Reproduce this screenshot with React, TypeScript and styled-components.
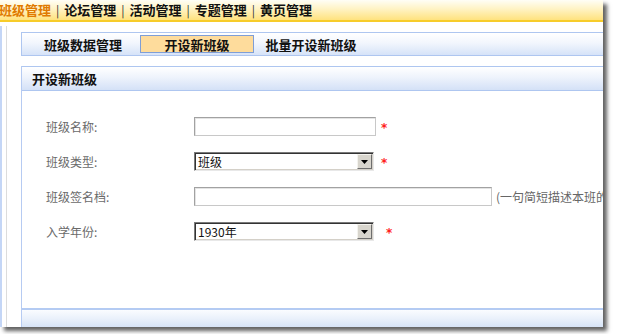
import React from "react";
import styled, { createGlobalStyle } from "styled-components";

const Global = createGlobalStyle`
  html, body { margin: 0; padding: 0; background: #ffffff; }
  body { font-family: "Noto Sans CJK SC", "Noto Sans", sans-serif; }
  * { box-sizing: border-box; }
`;

const Page = styled.div`
  width: 620px;
  height: 334px;
  background: #ffffff;
`;

const Frame = styled.div`
  width: 603px;
  height: 327px;
  background: #ffffff;
  box-shadow: 4px 4px 4px rgba(0, 0, 0, 0.62);
  overflow: hidden;
  display: flex;
  flex-direction: column;
`;

const TopNav = styled.div`
  height: 22px;
  flex: none;
  display: flex;
  align-items: center;
  padding-left: 0;
  background: linear-gradient(#fffef6 0%, #fff3c4 45%, #ffe27e 100%);
  border-bottom: 2px solid #f7cc2a;
  white-space: nowrap;
`;

const NavItem = styled.span<{ $active?: boolean }>`
  font-size: 13px;
  font-weight: 700;
  line-height: 20px;
  color: ${(p) => (p.$active ? "#e07a00" : "#111111")};
  &:first-child { margin-left: -1px; }
`;

const NavSep = styled.span`
  font-size: 12px;
  line-height: 20px;
  color: #333333;
  margin: 0 5px 0 5px;
`;

const Main = styled.div`
  flex: 1;
  display: flex;
  min-height: 0;
`;

const SideStrip = styled.div`
  width: 7px;
  flex: none;
  margin-top: 4px;
  border-left: 2px solid #c4d6f6;
  border-right: 1px solid #dcdcdc;
  background: #ffffff;
`;

const Content = styled.div`
  flex: 1;
  display: flex;
  flex-direction: column;
  padding: 10px 0 0 14px;
  min-width: 0;
`;

const TabBar = styled.div`
  height: 24px;
  flex: none;
  display: flex;
  align-items: flex-start;
  padding: 2px 0 0 4px;
  border: 1px solid #aec6f0;
  border-right: none;
  background: linear-gradient(#ffffff 0%, #f2f6fd 45%, #d6e3f8 100%);
  white-space: nowrap;
`;

const Tab = styled.div<{ $active?: boolean }>`
  width: 114px;
  height: 18px;
  display: flex;
  align-items: center;
  justify-content: center;
  font-size: 13px;
  font-weight: 700;
  color: #111111;
  border: 1px solid ${(p) => (p.$active ? "#7f9ed6" : "transparent")};
  background: ${(p) => (p.$active ? "#fedc9c" : "transparent")};
`;

const Panel = styled.div`
  flex: 1;
  margin-top: 10px;
  display: flex;
  flex-direction: column;
  border-left: 1px solid #b6cbf2;
  min-height: 0;
`;

const PanelHeader = styled.div`
  height: 25px;
  flex: none;
  display: flex;
  align-items: center;
  padding-left: 10px;
  font-size: 13px;
  font-weight: 700;
  color: #111111;
  border-top: 1px solid #aec6f0;
  border-bottom: 1px solid #aec6f0;
  background: linear-gradient(#ffffff 0%, #eef3fc 45%, #d4e1f7 100%);
`;

const PanelBody = styled.div`
  flex: 1;
  padding: 26px 0 0 24px;
  display: grid;
  grid-auto-rows: 19px;
  row-gap: 16px;
  align-content: start;
`;

const PanelFooter = styled.div`
  height: 19px;
  flex: none;
  border-top: 2px solid #b4cbf3;
  background: linear-gradient(#fafcff 0%, #eaf1fb 50%, #d6e3f6 100%);
`;

const Row = styled.div`
  display: flex;
  align-items: center;
  white-space: nowrap;
`;

const Label = styled.span`
  width: 148px;
  flex: none;
  font-size: 12px;
  color: #6a6a6a;
`;

const TextInput = styled.input<{ $w: number }>`
  width: ${(p) => p.$w}px;
  height: 19px;
  margin: 0;
  padding: 0 3px;
  font-size: 12px;
  font-family: inherit;
  border: 1px solid #a2a2a2;
  border-right-color: #c8c8c8;
  border-bottom-color: #c8c8c8;
  box-shadow: inset 1px 1px 0 #e4e4e4;
  background: #ffffff;
  outline: none;
`;

const SelectBox = styled.div`
  width: 180px;
  height: 19px;
  display: flex;
  align-items: center;
  border-top: 1px solid #7a7a7a;
  border-left: 1px solid #7a7a7a;
  border-right: 1px solid #e8e8e8;
  border-bottom: 1px solid #e8e8e8;
  box-shadow: inset 1px 1px 0 #333333, inset -1px -1px 0 #d4d0c8;
  background: #ffffff;
  padding: 1px 1px 1px 3px;
`;

const SelectText = styled.span`
  flex: 1;
  font-size: 12px;
  color: #111111;
  line-height: 15px;
`;

const SelectButton = styled.span`
  width: 15px;
  height: 15px;
  flex: none;
  display: flex;
  align-items: center;
  justify-content: center;
  background: #d8d5cd;
  border-top: 1px solid #f4f3ee;
  border-left: 1px solid #f4f3ee;
  border-right: 1px solid #6e6e6e;
  border-bottom: 1px solid #6e6e6e;
`;

const Star = styled.span<{ $gap: number }>`
  margin-left: ${(p) => p.$gap}px;
  color: #ff2020;
  font-size: 12px;
  font-weight: 700;
  font-family: "DejaVu Sans", sans-serif;
  position: relative;
  top: 1px;
`;

const Hint = styled.span`
  margin-left: 4px;
  font-size: 12px;
  color: #666666;
`;

const Arrow = () => (
  <svg width="7" height="4" viewBox="0 0 7 4">
    <polygon points="0,0 7,0 3.5,4" fill="#000" />
  </svg>
);

const FakeSelect = ({ value }: { value: string }) => (
  <SelectBox role="combobox">
    <SelectText>{value}</SelectText>
    <SelectButton>
      <Arrow />
    </SelectButton>
  </SelectBox>
);

const navItems = ["班级管理", "论坛管理", "活动管理", "专题管理", "黄页管理"];

export default function App() {
  return (
    <Page>
      <Global />
      <Frame>
        <TopNav>
          {navItems.map((n, i) => (
            <React.Fragment key={n}>
              {i > 0 && <NavSep>|</NavSep>}
              <NavItem $active={i === 0}>{n}</NavItem>
            </React.Fragment>
          ))}
        </TopNav>
        <Main>
          <SideStrip />
          <Content>
            <TabBar>
              <Tab>班级数据管理</Tab>
              <Tab $active>开设新班级</Tab>
              <Tab>批量开设新班级</Tab>
            </TabBar>
            <Panel>
              <PanelHeader>开设新班级</PanelHeader>
              <PanelBody>
                <Row>
                  <Label>班级名称:</Label>
                  <TextInput $w={182} />
                  <Star $gap={5}>*</Star>
                </Row>
                <Row>
                  <Label>班级类型:</Label>
                  <FakeSelect value="班级" />
                  <Star $gap={7}>*</Star>
                </Row>
                <Row>
                  <Label>班级签名档:</Label>
                  <TextInput $w={298} />
                  <Hint>(一句简短描述本班的特色)</Hint>
                </Row>
                <Row>
                  <Label>入学年份:</Label>
                  <FakeSelect value="1930年" />
                  <Star $gap={12}>*</Star>
                </Row>
              </PanelBody>
              <PanelFooter />
            </Panel>
          </Content>
        </Main>
      </Frame>
    </Page>
  );
}
